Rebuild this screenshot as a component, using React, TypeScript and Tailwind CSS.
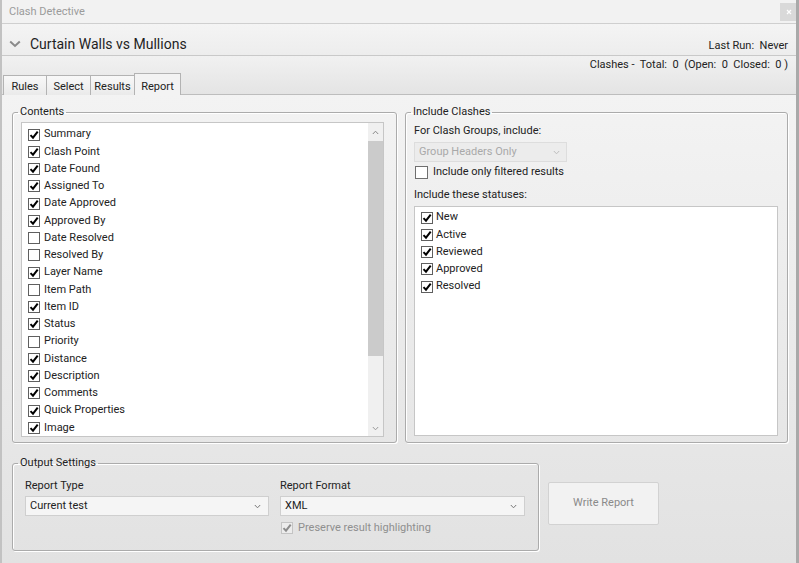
import React from "react";

const contents: [string, boolean][] = [
  ["Summary", true],
  ["Clash Point", true],
  ["Date Found", true],
  ["Assigned To", true],
  ["Date Approved", true],
  ["Approved By", true],
  ["Date Resolved", false],
  ["Resolved By", false],
  ["Layer Name", true],
  ["Item Path", false],
  ["Item ID", true],
  ["Status", true],
  ["Priority", false],
  ["Distance", true],
  ["Description", true],
  ["Comments", true],
  ["Quick Properties", true],
  ["Image", true],
];

const statuses = ["New", "Active", "Reviewed", "Approved", "Resolved"];

const tabs: [string, string][] = [
  ["Rules", "w-[44px]"],
  ["Select", "w-[45px]"],
  ["Results", "w-[45px]"],
];

function Box({ checked, disabled }: { checked: boolean; disabled?: boolean }) {
  return (
    <span
      className={
        disabled
          ? "flex h-[12px] w-[12px] shrink-0 items-center justify-center border border-[#c4c4c4] bg-[#ececec]"
          : "flex h-[12px] w-[12px] shrink-0 items-center justify-center border border-[#5f5f5f] bg-white"
      }
    >
      {checked && (
        <svg width="10" height="10" viewBox="0 0 10 10">
          <path
            d="M1.5 5.1 L4 7.7 L8.7 1.7"
            fill="none"
            stroke={disabled ? "#8c8c8c" : "#000"}
            strokeWidth="2"
          />
        </svg>
      )}
    </span>
  );
}

function Chevron({ color = "#777" }: { color?: string }) {
  return (
    <svg width="7" height="5" viewBox="0 0 7 5">
      <path d="M0.8 1 L3.5 3.8 L6.2 1" fill="none" stroke={color} strokeWidth="1" />
    </svg>
  );
}

function Legend({ children }: { children: React.ReactNode }) {
  return (
    <legend className="ml-[5px] px-[2px] text-[11px] leading-[16px] text-[#222]">
      {children}
    </legend>
  );
}

const fieldsetCls =
  "rounded-[3px] border border-[#ababab] shadow-[inset_1px_1px_0_#fff,1px_1px_0_#fff]";

export default function App() {
  return (
    <div
      className="flex h-[563px] w-[799px] flex-col overflow-hidden border-l-2 border-r-[3px] border-l-[#c2c2c2] border-r-[#a9a9a9] text-[11px] text-[#222]"
      style={{ fontFamily: "Roboto, 'Liberation Sans', sans-serif" }}
    >
      {/* title bar */}
      <div className="flex h-[24px] shrink-0 items-center justify-between border-b border-[#cfcfcf] bg-[#f2f2f2] pl-[7px]">
        <span className="pt-[1px] text-[11px] text-[#9b9b9b]">Clash Detective</span>
        <div className="mr-[-1px] flex h-[18px] w-[17px] items-center justify-center bg-[#d9d9d9]">
          <svg width="6" height="6" viewBox="0 0 6 6">
            <path d="M1 1 L5 5 M5 1 L1 5" stroke="#fff" strokeWidth="1.2" />
          </svg>
        </div>
      </div>

      {/* test header */}
      <div className="flex h-[32px] shrink-0 items-end justify-between border-b border-[#c9c9c9] bg-gradient-to-b from-[#f4f4f4] to-[#ededed] pb-[1px] pl-[7px] pr-[8px] shadow-[0_1px_0_#fafafa]">
        <div className="flex h-[20px] items-center gap-[9px]">
          <svg width="12" height="8" viewBox="0 0 12 8">
            <path d="M1.2 1.5 L6 6 L10.8 1.5" fill="none" stroke="#8a8a8a" strokeWidth="2" />
          </svg>
          <span className="text-[14px] text-[#1e1e1e]">Curtain Walls vs Mullions</span>
        </div>
        <span className="leading-[16px] text-[#222]">Last Run:&nbsp; Never</span>
      </div>

      {/* tab strip */}
      <div className="flex h-[39px] shrink-0 flex-col border-b border-[#bdbdbd] bg-gradient-to-b from-[#f1f1f1] to-[#e4e4e4]">
        <div className="flex justify-end pr-[8px] pt-[1px] leading-[16px]">
          Clashes -&nbsp; Total:&nbsp; 0&nbsp; (Open:&nbsp; 0&nbsp; Closed:&nbsp; 0 )
        </div>
        <div className="mt-auto flex items-end pl-[1px]">
          {tabs.map(([t, w]) => (
            <div
              key={t}
              className={`-mr-px flex h-[23px] items-center justify-center border border-b-0 border-[#b3b3b3] bg-gradient-to-b from-[#f8f8f8] to-[#e8e8e8] ${w}`}
            >
              {t}
            </div>
          ))}
          <div className="-mb-px flex h-[26px] w-[47px] items-center justify-center border border-b-0 border-[#b3b3b3] bg-[#f3f3f3] pt-[1px]">
            Report
          </div>
        </div>
      </div>

      {/* body */}
      <div className="flex flex-1 flex-col bg-gradient-to-b from-[#f3f3f3] to-[#e2e2e2] pl-[10px] pt-[9px]">
        <div className="flex gap-[8px]">
          <fieldset className={`${fieldsetCls} h-[339px] w-[385px]`}>
            <Legend>Contents</Legend>
            <div className="ml-[8px] mt-[2px] flex h-[315px] w-[363px] border border-[#c6c6c6] bg-white">
              <div className="flex-1 overflow-hidden pl-[6px] pt-[3px]">
                {contents.map(([label, on]) => (
                  <div key={label} className="flex h-[17.25px] items-center gap-[4px]">
                    <Box checked={on} />
                    <span>{label}</span>
                  </div>
                ))}
              </div>
              <div className="flex w-[15px] flex-col bg-[#f0f0f0]">
                <div className="flex h-[18px] items-center justify-center">
                  <span className="rotate-180">
                    <Chevron color="#888" />
                  </span>
                </div>
                <div className="h-[215px] bg-[#cbcbcb]" />
                <div className="flex-1" />
                <div className="flex h-[16px] items-center justify-center">
                  <Chevron color="#999" />
                </div>
              </div>
            </div>
          </fieldset>

          <fieldset className={`${fieldsetCls} h-[339px] w-[383px]`}>
            <Legend>Include Clashes</Legend>
            <div className="flex flex-col pl-[8px]">
              <div className="mt-[3px] leading-[16px]">For Clash Groups, include:</div>
              <div className="mt-[3px] flex h-[20px] w-[153px] items-center justify-between border border-[#dddddd] bg-[#ececec] pl-[4px] pr-[6px] text-[#a9a9a9]">
                <span>Group Headers Only</span>
                <Chevron color="#bdbdbd" />
              </div>
              <div className="mt-[3px] flex h-[14px] items-center gap-[5px]">
                <span className="ml-[1px] h-[13px] w-[13px] border border-[#6f6f6f] bg-white" />
                <span>Include only filtered results</span>
              </div>
              <div className="mt-[8px] leading-[16px]">Include these statuses:</div>
              <div className="mt-[3px] h-[230px] w-[364px] border border-[#c6c6c6] bg-white pl-[6px] pt-[2px]">
                {statuses.map((s) => (
                  <div key={s} className="flex h-[17.25px] items-center gap-[3px]">
                    <Box checked />
                    <span>{s}</span>
                  </div>
                ))}
              </div>
            </div>
          </fieldset>
        </div>

        <div className="mt-[12px] flex items-start">
          <fieldset className={`${fieldsetCls} h-[96px] w-[527px]`}>
            <Legend>Output Settings</Legend>
            <div className="flex gap-[11px] pl-[12px]">
              <div className="flex flex-col">
                <div className="mt-[7px] leading-[16px]">Report Type</div>
                <div className="mt-[2px] flex h-[20px] w-[244px] items-center justify-between border border-[#cfcfcf] bg-[#f5f5f5] pl-[4px] pr-[7px]">
                  <span>Current test</span>
                  <Chevron />
                </div>
              </div>
              <div className="flex flex-col">
                <div className="mt-[7px] leading-[16px]">Report Format</div>
                <div className="mt-[2px] flex h-[20px] w-[245px] items-center justify-between border border-[#cfcfcf] bg-[#f5f5f5] pl-[4px] pr-[7px]">
                  <span>XML</span>
                  <Chevron />
                </div>
                <div className="mt-[4px] flex items-center gap-[5px] pl-[1px]">
                  <Box checked disabled />
                  <span className="text-[#8f8f8f]">Preserve result highlighting</span>
                </div>
              </div>
            </div>
          </fieldset>
          <button
            type="button"
            className="ml-[9px] mt-[27px] flex h-[43px] w-[111px] items-center justify-center rounded-[2px] border border-[#d2d2d2] bg-[#f2f2f2] text-[11px] text-[#8a8a8a]"
          >
            Write Report
          </button>
        </div>
      </div>
    </div>
  );
}
